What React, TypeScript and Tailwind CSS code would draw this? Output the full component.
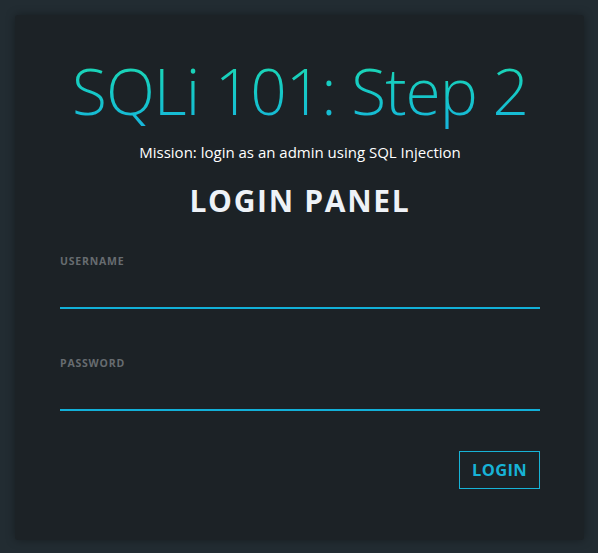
export default function App() {
  return (
    <div className="min-h-screen bg-[#222c32] pl-[15px] pr-[14px] pt-[15px] pb-[13px]" style={{ fontFamily: '"Open Sans", "Noto Sans", sans-serif' }}>
      <div className="bg-[#1c2226] rounded-[3px] shadow-[0_0_10px_rgba(0,0,0,0.35)] pl-[45px] pr-[44px] pt-[38px] pb-[51px]">
        {/* heading */}
        <h1 className="text-center text-[64px] leading-[76px] font-light tracking-[-1px] whitespace-nowrap bg-gradient-to-b from-[#1fdcac] to-[#18b4dc] bg-clip-text text-transparent">
          SQLi 101: Step 2
        </h1>
        <p className="text-center text-white text-[15px] leading-[20px] mt-[13px]">
          Mission: login as an admin using SQL Injection
        </p>
        <h2 className="text-center text-[#eef2f7] text-[30px] leading-[36px] font-bold tracking-[1.7px] mt-[21px]">
          LOGIN PANEL
        </h2>

        <form className="mt-[35px]" onSubmit={(e) => e.preventDefault()}>
          <label className="block text-[10.5px] font-bold tracking-[0.8px] text-[#676c70] leading-[14px]">USERNAME</label>
          <input type="text" className="block w-full h-[41px] bg-transparent border-b-2 border-[#12b0d8] outline-none text-white" />

          <label className="block text-[10.5px] font-bold tracking-[0.8px] text-[#676c70] leading-[14px] mt-[47px]">PASSWORD</label>
          <input type="password" className="block w-full h-[41px] bg-transparent border-b-2 border-[#12b0d8] outline-none text-white" />

          <div className="flex justify-end mt-[40px]">
            <button className="w-[81px] h-[38px] border border-[#17b3d6] text-[#17b3d6] text-[16.5px] font-bold tracking-[0.3px]">
              LOGIN
            </button>
          </div>
        </form>
      </div>
    </div>
  );
}
